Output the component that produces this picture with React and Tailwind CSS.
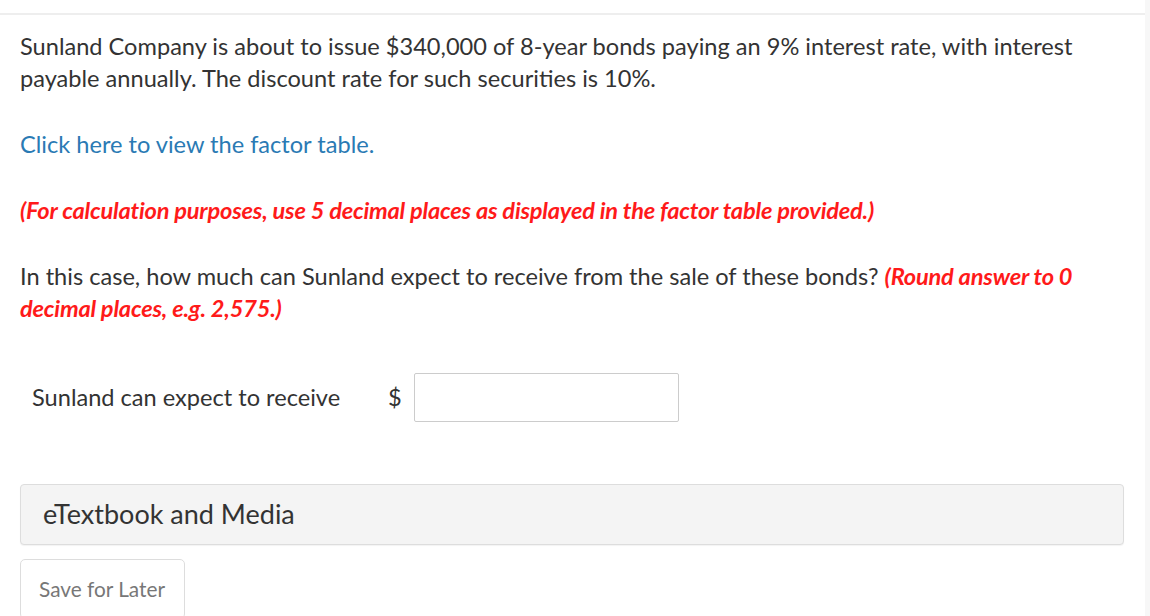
const App = () => {
  return (
    <div
      className="flex min-h-[616px] w-[1150px] overflow-hidden bg-white text-[#333]"
      style={{ fontFamily: "Lato, 'Noto Sans', sans-serif" }}
    >
      <div className="flex-1">
        <div className="mt-[13px] h-[2px] bg-[#eeeeee]" />
        <div className="px-5 pt-[15px]">
          <p className="text-[23.6px] leading-[32px]">
            Sunland Company is about to issue $340,000 of 8-year bonds paying an 9% interest rate, with interest
            payable annually. The discount rate for such securities is 10%.
          </p>
          <p className="mt-[34px] text-[23.6px] leading-[32px] text-[#2a7ab4]">
            Click here to view the factor table.
          </p>
          <p className="mt-[34px] text-[23.6px] font-bold italic leading-[32px] tracking-[-0.2px] text-[#ff1a1a]">
            (For calculation purposes, use 5 decimal places as displayed in the factor table provided.)
          </p>
          <p className="mt-[34px] text-[23.6px] leading-[32px]">
            In this case, how much can Sunland expect to receive from the sale of these bonds?{" "}
            <span className="font-bold italic tracking-[-0.2px] text-[#ff1a1a]">
              (Round answer to 0 decimal places, e.g. 2,575.)
            </span>
          </p>

          <div className="mt-[49px] flex items-center pl-3">
            <span className="w-[356px] text-[23.6px]">Sunland can expect to receive</span>
            <span className="w-[26px] text-[23.6px]">$</span>
            <input
              type="text"
              className="h-[49px] w-[265px] rounded-[2px] border border-[#cccccc] bg-white px-2 outline-none"
            />
          </div>

          <div className="mt-[62px] flex h-[61px] w-[1104px] items-center rounded-[4px] border border-[#dddddd] bg-[#f4f4f4] px-[22px] shadow-[0_1px_1px_rgba(0,0,0,0.05)]">
            <span className="text-[27px]">eTextbook and Media</span>
          </div>

          <button
            type="button"
            className="mt-[14px] h-[60px] w-[165px] rounded-[5px] border border-[#dddddd] bg-white pl-[18px] text-left text-[20.8px] text-[#777]"
          >
            Save for Later
          </button>
        </div>
      </div>
      <div className="w-[5px] bg-[#f7f7f7]" />
    </div>
  );
};

export default App;
